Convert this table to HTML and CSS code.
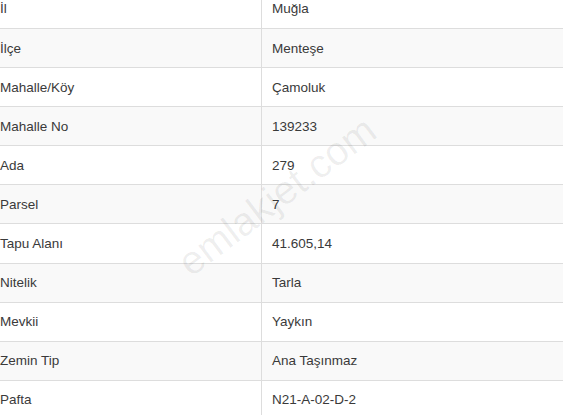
FILE: index.html
```
<!DOCTYPE html>
<html lang="tr">
<head>
<meta charset="utf-8">
<link rel="stylesheet" href="styles.css">
</head>
<body>
<div class="page">
  <div class="info">
    <div class="row"><div class="key">İl</div><div class="val">Muğla</div></div>
    <div class="row alt"><div class="key">İlçe</div><div class="val">Menteşe</div></div>
    <div class="row"><div class="key">Mahalle/Köy</div><div class="val">Çamoluk</div></div>
    <div class="row alt"><div class="key">Mahalle No</div><div class="val">139233</div></div>
    <div class="row"><div class="key">Ada</div><div class="val">279</div></div>
    <div class="row alt"><div class="key">Parsel</div><div class="val">7</div></div>
    <div class="row"><div class="key">Tapu Alanı</div><div class="val">41.605,14</div></div>
    <div class="row alt"><div class="key">Nitelik</div><div class="val">Tarla</div></div>
    <div class="row"><div class="key">Mevkii</div><div class="val">Yaykın</div></div>
    <div class="row alt"><div class="key">Zemin Tip</div><div class="val">Ana Taşınmaz</div></div>
    <div class="row"><div class="key">Pafta</div><div class="val">N21-A-02-D-2</div></div>
  </div>
  <div class="watermark">emlakjet.com</div>
</div>
</body>
</html>
```
FILE: styles.css
```
html, body {
  margin: 0;
  padding: 0;
  background: #fff;
}
body {
  font-family: "Liberation Sans", Arial, sans-serif;
  font-size: 13.5px;
  color: #3a3a3a;
  overflow: hidden;
}
.page {
  position: relative;
  width: 563px;
  height: 415px;
  overflow: hidden;
}
.info {
  margin-top: -10.1px;
}
.row {
  display: grid;
  grid-template-columns: 261px 1fr;
  height: 39.1px;
  box-sizing: border-box;
  border-top: 1px solid #dddddd;
  background: #fff;
}
.row:first-child {
  border-top: none;
  height: 38.1px;
}
.row.alt {
  background: #f9f9f9;
}
.key, .val {
  display: flex;
  align-items: center;
}
.key {
  padding-left: 0;
}
.val {
  border-left: 1px solid #dddddd;
  padding-left: 10px;
}
.watermark {
  position: absolute;
  left: 277px;
  top: 196px;
  transform: translate(-50%, -50%) rotate(-37deg);
  font-size: 40px;
  color: rgba(0, 0, 0, 0.065);
  white-space: nowrap;
  pointer-events: none;
}
```
